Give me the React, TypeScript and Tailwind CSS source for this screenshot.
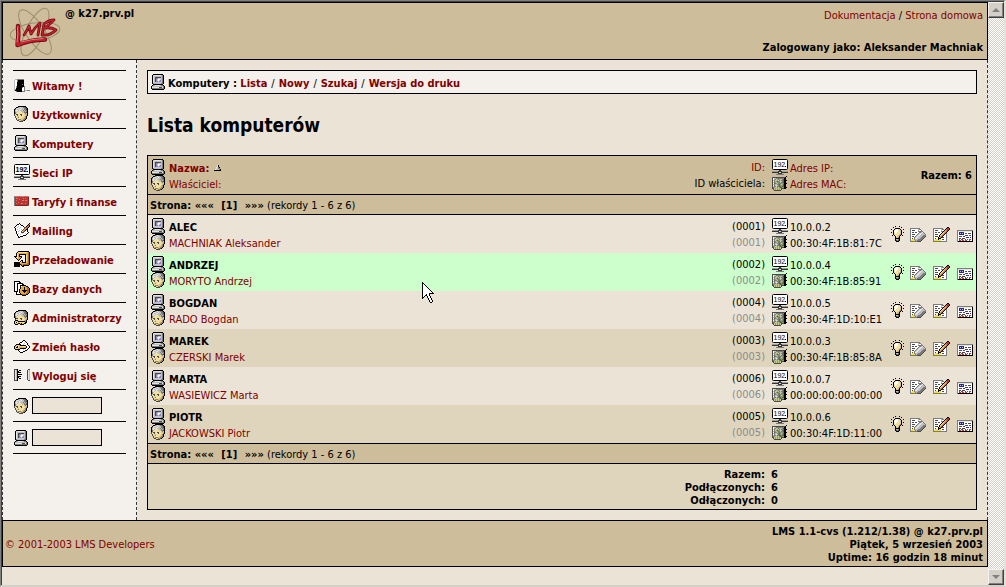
import type { ReactNode } from "react";

const palette: Record<string, string> = {
  K: "#000000",
  k: "#4a4a4a",
  D: "#7b7b7b",
  G: "#bdbdbd",
  E: "#e4e4e4",
  W: "#ffffff",
  P: "#8c84b5",
  L: "#c6c2e4",
  S: "#d9c48a",
  Y: "#f0e0a4",
  T: "#9c8450",
  R: "#b83430",
  r: "#d8776c",
  b: "#8c2420",
  O: "#e8a83c",
  o: "#a86a10",
  N: "#56664a",
  n: "#8c9c6c",
  m: "#c6cc8c",
  B: "#2a2a8c",
  y: "#f4e428",
  C: "#c8743c",
};

function Pixels({ rows, label }: { rows: string[]; label?: string }) {
  const width = Math.max(...rows.map((r) => r.length));
  const rects: ReactNode[] = [];
  rows.forEach((row, y) => {
    let x = 0;
    while (x < row.length) {
      const c = row[x];
      let end = x + 1;
      while (end < row.length && row[end] === c) end++;
      if (palette[c]) {
        rects.push(<rect key={`${x}-${y}`} x={x} y={y} width={end - x} height={1} fill={palette[c]} />);
      }
      x = end;
    }
  });
  return (
    <svg
      width={width}
      height={rows.length}
      viewBox={`0 0 ${width} ${rows.length}`}
      shapeRendering="crispEdges"
      className="block shrink-0"
      role={label ? "img" : undefined}
      aria-label={label}
      aria-hidden={label ? undefined : true}
    >
      {rects}
    </svg>
  );
}

const computer = [
  "..KKKKKKKKKK..",
  ".KGEEEEEEEGDK.",
  ".KEGGGGGGGGDK.",
  ".KEGkkkkkkGDK.",
  ".KEGkPPLLLGDK.",
  ".KEGkPLWWLGDK.",
  ".KEGkPLWLPGDK.",
  ".KEGkPPLPPGDK.",
  ".KEGGLLLLLGDK.",
  ".KDGGGGGGGDDK.",
  "..KKKKKKKKKK..",
  ".KDGEEEEEGDDK.",
  "KGGGGGGGGGGGDK",
  "KEEEEEEEkkkEDK",
  "KDDDDDDDDDDDDK",
  ".KKKKKKKKKKKK.",
];

const head = [
  "....KKKKKKKK..",
  "..KKDGEGGDDkK.",
  ".KGEEGGEGGDDkK",
  "KDEGGEEGGGDDkK",
  "KGEEGEGGGDGDDK",
  "KGEGYYYSGGDGDK",
  "KDGYYYYYSSDDkK",
  "KDYYYYYYYYSDSK",
  "kSkkYYkkYYSSSK",
  "kYYkYYYkYYYSTK",
  ".kYYSYYYYYSTK.",
  ".kYSTYYYYSSTK.",
  "..kYYYYYSSTTK.",
  "..kSTTTSSTTK..",
  "...kkYSTTkK...",
  ".....kkkk.....",
];

const admin = [
  "....KKKKKKKK..",
  "..KKDGEGGDDkK.",
  ".KGEEGGEGGDDkK",
  "KDEGGEEGGGDDkK",
  "KGEEGEGGGDGDDK",
  "KGEGYYYSGGDGDK",
  "KDGYYYYYSSDDkK",
  "KDYYYYYYYYSDSK",
  ".KkkYYkkYYSSSK",
  ".kYYYYYkYYYSTK",
  ".KKKYYYYYYSTK.",
  "KOYOKKKKKKKTK.",
  "KYKYOYYYYYYKK.",
  "KOYOKKOKYOKK..",
  ".KKK..KKKK....",
];

const nic = [
  "..............K",
  "kkkkkkkkkkkkkK.",
  "kWGGDDDDDDDDKK.",
  "kWnDGGDnmGDNKK.",
  "kGDGmnmDGDDNKKK",
  "kWDGnNnnmGDNKK.",
  "kGDnmnDDGDDNKK.",
  "kWNDnGDDDnnDKKK",
  "kGDGGDDNnmnNKK.",
  "kWDGEGDNnnnNKK.",
  "kGDDGDDNNnNNKK.",
  "kDnmmnmnNNnnKKK",
  "kkmnmnmnmkkkKK.",
  ".kmnmnmnmk.....",
  "..kkkkkkk......",
];

const bulb = [
  "....K...K....",
  "..K.......K..",
  "....KKKKK....",
  "K..KYWWYSK..K",
  "..KYWWWYYSK..",
  "..KWWWWYYSK..",
  "K.KYWWYYYSK.K",
  "..KYWYYYYSK..",
  "..KYYYYYSTK..",
  ".K.KYYYSTK.K.",
  "....KYSSK....",
  "....KSSTK....",
  "....KKKKK....",
  "....KGGDK....",
  "....KkDkK....",
  ".....KKK.....",
];

const erase = [
  "DDDDDDDDDD.......",
  "DWWWWWWWGDD......",
  "DWkkkWWWGWWD.....",
  "DWWWWWWWDDDDD....",
  "DWkkWkkWWDDGED...",
  "DWWWWWWWDGEEGGD..",
  "DWkkkWWDGEEGGGGD.",
  "DWWWWWDGEEGGGDDD.",
  "DWkkWDGEEGGGDDDk.",
  "DWWWDGEEGGGDDDk..",
  "DWkWDEEGGGDDDk...",
  "DWyyDGGGDDDDk....",
  "DyyyyDGDDDDk.....",
  "DDDDDDDkkkk......",
];

const edit = [
  "..............KK..",
  "DDDDDDDDDD...KRRK.",
  "DWWWWWWWGDD.KCRRK.",
  "DWkkkWWWGWWKOCRK..",
  "DWWWWWWWDDKOOCK...",
  "DWkkWkkWWKYOCK....",
  "DWWWWWWWKYOCKD....",
  "DWkkkWWKYOCKWD....",
  "DWWWWWKYOCKWWD....",
  "DWkkkWKOCKWWWD....",
  "DWWWWKSCKkkWWD....",
  "DWkWWKKKWWWWWD....",
  "DWyyyKyyWkkWWD....",
  "DyyyyyyyWWWWWD....",
  "DDDDDDDDDDDDDD....",
];

const card = [
  "DDDDDDDDDDDDDDDD",
  "DEEEEEEEEEEEEEEK",
  "DWBBBBBWWWWWWWWK",
  "DWBLBLBWkkWkkkWK",
  "DWBBBBBWWWWWWWWK",
  "DWWWWWWWkkkWkkWK",
  "DWkkkWkkWWWWWWWK",
  "DWWWWWWWWBBBWBWK",
  "DWkkWkkkWWWWWWWK",
  "DWRWRRWWRWRWRRWK",
  "DWRRWRRWRRWWRWWK",
  "DKKKKKKKKKKKKKKK",
];

const door = [
  ".GGDDDDDDD......",
  "GWWDKKKKKK......",
  "GWWDKKKKKK......",
  "GWWKKKKKKK......",
  "GWWKKKKKKK......",
  "GWWKKKKKDK......",
  "GWWKKKKKKK......",
  "GWDKKKKKKKD.....",
  "GWDKKKKKDWD.....",
  "GWKKKKKKWWD.....",
  "GDKKKKKKWWD.....",
  "GKKKKKKKWWDGGDDD",
  "..DKKKKKDDD.....",
];

const bricks = [
  "DrrrrDrrrrrDrrr",
  "DRRRRRRRRRRRRRb",
  "DRrrRRRRRrRrRRb",
  "DRRRRrRRRRRRRRb",
  "DRrRRRRRrrRrrRb",
  "DRRRRRRRRRRRRRb",
  "DRRRrRRRRRRRRRb",
  "DRrRRRRrrRRrRRb",
  "DRRRRRRRRRRRRRb",
  "DbbbbbbbbbbbbbD",
];

const mailing = [
  ".....K.........K",
  "...KKWK.......KT",
  "..KWWWWKK....KCK",
  ".KWWGWWWWK..KCCK",
  "KWWGWWGWWWkkCoK.",
  ".KWWWGWWWWkOCK..",
  ".KWGWWWGWkOCKK..",
  ".KWWWGWWkOCKWK..",
  "..KWGWWkYCkWWK..",
  "..KWWWWkkkWWWWK.",
  "..KWGWWWGWWGWK..",
  "...KWWGWWWWWK...",
  "...KWWWWWKKK....",
  "....KWKKK.......",
  "....KK..........",
];

const reload = [
  "....KKKKKKKKKKK.",
  "...KYYYYYYYYYOoK",
  "..KYOOOOOOOOOOoK",
  "..KYOKKKKKKKOOoK",
  "..KYOK.....KYOoK",
  "KKKYOKKK...KYOoK",
  ".KYYOOOK...KYOoK",
  "..KYOOK....KYOoK",
  "...KOK.....KYOoK",
  "....K..KK..KYOoK",
  "......KYK..KYOoK",
  "KKKKKKYOKKKKOOoK",
  "KKKKKKOOOOOOOooK",
  "KKKKKKKoOooooooK",
  "KKKKKK.KoKKKKKK.",
  "KKKKKK..KK......",
];

const database = [
  "KKKKKK..........",
  "KWWWWKK.........",
  "KWWKKKKKK.......",
  "KWWKWWWWKK......",
  "KWWKWWKKKKKK....",
  "KWWKWWKWOOOOKK..",
  "KWWKWWKOOOKOOoK.",
  "KWWKWWKOOOKOOooK",
  "KWWKWKOOOOKOOooK",
  "KWWKWKOOKKKKKooK",
  "KKKKWKOOOKKKOooK",
  "..KWWKOOOOKOOooK",
  "..KWWWKOOOOOooK.",
  "..KKKKKKooooKK..",
  "........KKKK....",
];

const password = [
  ".........KK.....",
  "........KWWK....",
  "......KKWWWWK...",
  ".....KWWWWGWWK..",
  "..KKKKKWWGWWWK..",
  ".KOYYOKKKKKKWWK.",
  "KOYKYOYYYYYYKWWK",
  "KYKKYOOOOOOOKWWK",
  "KOYYOOKKKKKKWWK.",
  ".KKKKKWWWGWWWK..",
  "....KWWWWWWKK...",
  ".....KWWWKK.....",
  "......KKK.......",
];

const logout = [
  "kkkK..........kk",
  "kEGK.KK......kEG",
  "kEGKK........kEG",
  "kEGKKKK......kEG",
  "kEGK.........kEG",
  "kEGKKKKK.....kEG",
  "kEGK.........kEG",
  "kEGKKKK......kEG",
  "kEGKK........kEG",
  "kEGK.KK......kEG",
  "kEGK.........kEG",
  "kkkK..........kk",
];

const sortUp = [
  "...EK..",
  "...EK..",
  "..E.DK.",
  "..E.DD.",
  ".E...DK",
  "KKKKKKK",
];

const pointer = [
  "K...........",
  "KK..........",
  "KWK.........",
  "KWWK........",
  "KWWWK.......",
  "KWWWWK......",
  "KWWWWWK.....",
  "KWWWWWWK....",
  "KWWWWWWWK...",
  "KWWWWWWWWK..",
  "KWWWWWWWWWK.",
  "KWWWWWWKKKKK",
  "KWWWKWWK....",
  "KWWKKWWK....",
  "KWK..KWWK...",
  "KK...KWWK...",
  "K.....KWWK..",
  "......KWWK..",
  ".......KWWK.",
  ".......KWWK.",
  "........KK..",
];

function NetIcon() {
  return (
    <svg width="16" height="16" viewBox="0 0 16 16" className="block shrink-0" aria-hidden="true">
      <rect x="0.5" y="0.5" width="15" height="10" rx="1" fill="#fff" stroke="#000" />
      <g className="font-['Liberation_Sans']">
        <text x="1.5" y="8" fontSize="7" fill="#000">
          192
        </text>
      </g>
      <rect x="13" y="7" width="1" height="1" fill="#000" />
      <path d="M7 11h2v1H7zM0 13h6v1H0zM10 13h6v1h-6z" fill="#333" />
      <path d="M0 12h16v1H0z" fill="#9c9c9c" />
      <path d="M6 12h4v3H6z" fill="#333" />
      <path d="M7 13h2v1H7z" fill="#ddd" />
      <path d="M4 15h8v1H4z" fill="#777" />
    </svg>
  );
}

function Logo() {
  return (
    <svg width="52" height="50" viewBox="0 0 52 50" className="block shrink-0" role="img" aria-label="LMS">
      <g fill="none" stroke="#9a8c70" strokeWidth="1">
        <ellipse cx="26" cy="25" rx="25" ry="9" transform="rotate(-8 26 25)" />
        <ellipse cx="26" cy="25" rx="26" ry="9" transform="rotate(56 26 25)" />
        <ellipse cx="26" cy="25" rx="26" ry="9" transform="rotate(116 26 25)" />
      </g>
      <g fill="none" strokeLinecap="round" strokeLinejoin="round">
        <g stroke="#6a0c14">
          <path d="M9 19Q10 28 8.500 38Q20 33 36 32.500" strokeWidth="4.400" />
          <path d="M15 28Q18 24 20 19L22 27Q26 20 31 16L29 28" strokeWidth="2.800" />
          <path d="M33 28L35 17Q40 13 45 13Q41 18 35 21Q42 20 47 23Q41 29 33 28" strokeWidth="2.800" />
        </g>
        <g stroke="#c8202c">
          <path d="M9 19Q10 28 8.500 38Q20 33 36 32.500" strokeWidth="2.600" />
          <path d="M15 28Q18 24 20 19L22 27Q26 20 31 16L29 28" strokeWidth="1.300" />
          <path d="M33 28L35 17Q40 13 45 13Q41 18 35 21Q42 20 47 23Q41 29 33 28" strokeWidth="1.300" />
        </g>
        <path d="M8.500 20Q9.500 28 8 35M12 35Q22 32 34 31.500" stroke="#f08088" strokeWidth="0.900" />
      </g>
    </svg>
  );
}

const menu: { label: string; icon: ReactNode }[] = [
  { label: "Witamy !", icon: <Pixels rows={door} /> },
  { label: "Użytkownicy", icon: <Pixels rows={head} /> },
  { label: "Komputery", icon: <Pixels rows={computer} /> },
  { label: "Sieci IP", icon: <NetIcon /> },
  { label: "Taryfy i finanse", icon: <Pixels rows={bricks} /> },
  { label: "Mailing", icon: <Pixels rows={mailing} /> },
  { label: "Przeładowanie", icon: <Pixels rows={reload} /> },
  { label: "Bazy danych", icon: <Pixels rows={database} /> },
  { label: "Administratorzy", icon: <Pixels rows={admin} /> },
  { label: "Zmień hasło", icon: <Pixels rows={password} /> },
  { label: "Wyloguj się", icon: <Pixels rows={logout} /> },
];

const hosts = [
  { name: "ALEC", owner: "MACHNIAK Aleksander", id: "0001", ip: "10.0.0.2", mac: "00:30:4F:1B:81:7C" },
  { name: "ANDRZEJ", owner: "MORYTO Andrzej", id: "0002", ip: "10.0.0.4", mac: "00:30:4F:1B:85:91" },
  { name: "BOGDAN", owner: "RADO Bogdan", id: "0004", ip: "10.0.0.5", mac: "00:30:4F:1D:10:E1" },
  { name: "MAREK", owner: "CZERSKI Marek", id: "0003", ip: "10.0.0.3", mac: "00:30:4F:1B:85:8A" },
  { name: "MARTA", owner: "WASIEWICZ Marta", id: "0006", ip: "10.0.0.7", mac: "00:00:00:00:00:00" },
  { name: "PIOTR", owner: "JACKOWSKI Piotr", id: "0005", ip: "10.0.0.6", mac: "00:30:4F:1D:11:00" },
];

function rowColor(i: number) {
  if (i === 1) return "bg-[#ccffcc]";
  return i % 2 === 0 ? "bg-[#ebe4d6]" : "bg-[#dfd5bd]";
}

function Line({ icon, children }: { icon: ReactNode; children: ReactNode }) {
  return (
    <div className="flex h-4 items-center whitespace-nowrap">
      <span className="w-[18px] shrink-0">{icon}</span>
      <span className="flex items-center pt-[2px]">{children}</span>
    </div>
  );
}

function Pager() {
  return (
    <tr className="bg-[#cebd9b]">
      <td colSpan={4} className="h-5 border-t border-black px-[2px] pt-[2px] pb-0 font-normal">
        <b>
          Strona: ««« <span className="mx-1">[1]</span> »»»
        </b>{" "}
        (rekordy 1 - 6 z 6)
      </td>
    </tr>
  );
}

function Link({ children, className = "" }: { children: ReactNode; className?: string }) {
  return (
    <a href="#" className={`text-[#800000] ${className}`}>
      {children}
    </a>
  );
}

function Slash() {
  return <span className="mx-1">/</span>;
}

function ScrollButton({ down = false }: { down?: boolean }) {
  return (
    <button
      type="button"
      aria-label={down ? "W dół" : "W górę"}
      className="flex h-4 w-4 items-center justify-center border border-t-[#f4f2ee] border-r-[#404040] border-b-[#404040] border-l-[#f4f2ee] bg-[#d4d0c8] shadow-[inset_-1px_-1px_0_#808080]"
    >
      <svg width="8" height="4" viewBox="0 0 8 4" className={down ? "rotate-180" : ""} aria-hidden="true">
        <path d="M4 0L8 4H0z" fill="#808080" />
      </svg>
    </button>
  );
}

export default function App() {
  return (
    <div className="relative flex min-h-screen border-t border-r-2 border-b-2 border-l border-t-[#808080] border-r-[#e4e0da] border-b-[#d4d0c8] border-l-[#808080] bg-[#ebe4d6] font-['DejaVu_Sans_Condensed','DejaVu_Sans',sans-serif] text-[11px] leading-[13px] text-black">
      <div className="flex min-w-0 grow flex-col border-t border-l border-[#404040]">
        <header className="flex h-[58px] items-start gap-1 border border-black bg-[#cebd9b] pr-1 pl-[6px]">
          <div className="pt-1">
            <Logo />
          </div>
          <b className="pt-1">@ k27.prv.pl</b>
          <div className="ml-auto flex flex-col gap-[19px] pt-[6px] text-right">
            <nav>
              <Link>Dokumentacja</Link> / <Link>Strona domowa</Link>
            </nav>
            <b>Zalogowany jako: Aleksander Machniak</b>
          </div>
        </header>

        <div className="flex border-r border-l border-dashed border-[#333]">
          <aside className="w-[134px] shrink-0 border-r border-dashed border-[#333] bg-[#f4f0ec] px-[10px] pt-[10px]">
            <ul className="border-t border-black">
              {menu.map((m) => (
                <li key={m.label} className="border-b border-black">
                  <a href="#" className="flex h-7 items-center pl-px font-bold whitespace-nowrap text-[#800000]">
                    <span className="w-[18px] shrink-0">{m.icon}</span>
                    <span className="pt-[2px]">{m.label}</span>
                  </a>
                </li>
              ))}
            </ul>
            <div className="flex h-8 items-center gap-1 border-b border-black pl-px">
              <Pixels rows={head} />
              <input aria-label="Szukaj użytkownika" className="h-[17px] w-[70px] border border-black bg-[#ebe4d6]" />
            </div>
            <div className="flex h-8 items-center gap-1 border-b border-black pl-px">
              <Pixels rows={computer} />
              <input aria-label="Szukaj komputera" className="h-[17px] w-[70px] border border-black bg-[#ebe4d6]" />
            </div>
          </aside>

          <main className="min-w-0 grow p-[10px]">
            <nav className="flex h-6 items-center border border-black bg-[#f4f0ec] pl-[3px]">
              <span className="w-[17px]">
                <Pixels rows={computer} />
              </span>
              <span className="pt-[2px]">
                <b>Komputery : </b>
                <Link className="font-bold">Lista</Link>
                <Slash />
                <Link className="font-bold">Nowy</Link>
                <Slash />
                <Link className="font-bold">Szukaj</Link>
                <Slash />
                <Link className="font-bold">Wersja do druku</Link>
              </span>
            </nav>

            <h1 className="pt-[19px] pb-[18px] text-[19px] leading-6 font-bold">Lista komputerów</h1>

            <table className="w-full border-separate border-spacing-0 border border-t-0 border-black">
              <colgroup>
                <col />
                <col className="w-[100px]" />
                <col className="w-[117px]" />
                <col className="w-[89px]" />
              </colgroup>
              <thead>
                <tr className="bg-[#cebd9b] text-left">
                  <th className="border-t border-black p-[3px] font-normal">
                    <Line icon={<Pixels rows={computer} />}>
                      <Link className="mr-1 font-bold">Nazwa:</Link>
                      <Pixels rows={sortUp} />
                    </Line>
                    <Line icon={<Pixels rows={head} />}>
                      <Link>Właściciel:</Link>
                    </Line>
                  </th>
                  <th className="border-t border-black pt-[2px] pr-[5px] text-right leading-4 font-normal whitespace-nowrap">
                    <Link>ID:</Link>
                    <br />
                    ID właściciela:
                  </th>
                  <th className="border-t border-black px-[2px] font-normal">
                    <Line icon={<NetIcon />}>
                      <Link>Adres IP:</Link>
                    </Line>
                    <Line icon={<Pixels rows={nic} />}>
                      <Link>Adres MAC:</Link>
                    </Line>
                  </th>
                  <th className="border-t border-black pr-1 text-right font-bold">Razem: 6</th>
                </tr>
                <Pager />
              </thead>
              <tbody>
                {hosts.map((h, i) => (
                  <tr key={h.name} className={rowColor(i)}>
                    <td className={i === 0 ? "border-t border-black p-[3px]" : "p-[3px]"}>
                      <Line icon={<Pixels rows={computer} />}>
                        <b>{h.name}</b>
                      </Line>
                      <Line icon={<Pixels rows={head} />}>
                        <Link>{h.owner}</Link>
                      </Line>
                    </td>
                    <td className={`pt-[2px] pr-[5px] text-right leading-4 ${i === 0 ? "border-t border-black" : ""}`}>
                      ({h.id})
                      <br />
                      <span className="text-[#8c8c8c]">({h.id})</span>
                    </td>
                    <td className={`px-[2px] ${i === 0 ? "border-t border-black" : ""}`}>
                      <Line icon={<NetIcon />}>{h.ip}</Line>
                      <Line icon={<Pixels rows={nic} />}>{h.mac}</Line>
                    </td>
                    <td className={i === 0 ? "border-t border-black" : ""}>
                      <div className="flex items-end justify-end gap-[6px] pr-[3px]">
                        <button type="button" aria-label="Przełącz">
                          <Pixels rows={bulb} />
                        </button>
                        <button type="button" aria-label="Usuń">
                          <Pixels rows={erase} />
                        </button>
                        <button type="button" aria-label="Edytuj">
                          <Pixels rows={edit} />
                        </button>
                        <button type="button" aria-label="Informacje">
                          <Pixels rows={card} />
                        </button>
                      </div>
                    </td>
                  </tr>
                ))}
              </tbody>
              <tfoot className="font-bold">
                <Pager />
                <tr className="bg-[#dfd5bd]">
                  <td colSpan={2} className="border-t border-black pt-1 pr-[5px] pb-[2px] text-right">
                    Razem:
                    <br />
                    Podłączonych:
                    <br />
                    Odłączonych:
                  </td>
                  <td colSpan={2} className="border-t border-black pt-1 pb-[2px] pl-px">
                    6
                    <br />
                    6
                    <br />0
                  </td>
                </tr>
              </tfoot>
            </table>
          </main>
        </div>

        <footer className="flex items-center justify-between border border-black bg-[#cebd9b] pt-1 pr-1 pb-[2px] pl-[2px]">
          <Link>© 2001-2003 LMS Developers</Link>
          <div className="text-right font-bold">
            LMS 1.1-cvs (1.212/1.38) @ k27.prv.pl
            <br />
            Piątek, 5 wrzesień 2003
            <br />
            Uptime: 16 godzin 18 minut
          </div>
        </footer>
      </div>

      <div className="flex w-4 shrink-0 flex-col justify-between border-t border-[#404040] bg-[repeating-conic-gradient(#d4d0c8_0_25%,#ffffff_0_50%)] bg-size-[2px_2px]">
        <ScrollButton />
        <ScrollButton down />
      </div>

      <div className="pointer-events-none absolute top-[281px] left-[421px]">
        <Pixels rows={pointer} />
      </div>
    </div>
  );
}
